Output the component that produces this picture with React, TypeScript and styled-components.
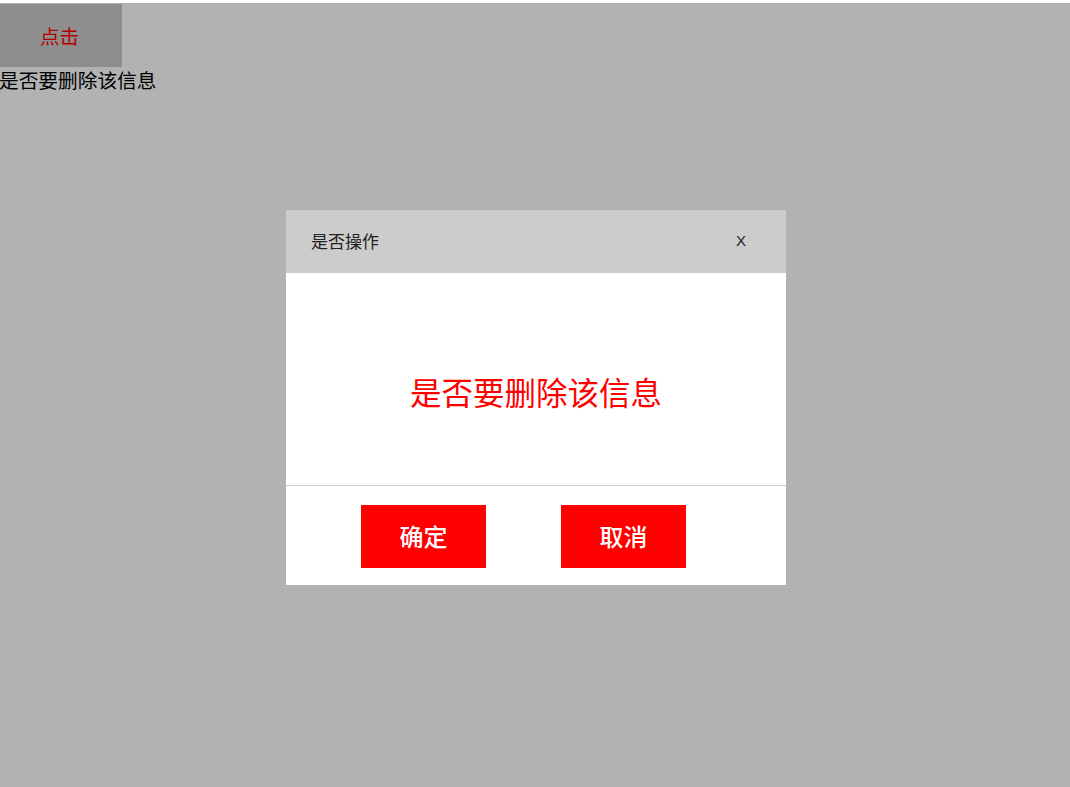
import React from "react";
import styled, { createGlobalStyle } from "styled-components";

const Global = createGlobalStyle`
  html, body { margin: 0; padding: 0; background: #ffffff; }
  body { font-family: "Microsoft YaHei", "Noto Sans CJK SC", "Noto Sans", sans-serif; }
`;

const Page = styled.div`
  width: 1070px;
  height: 787px;
  padding-top: 4px;
  box-sizing: border-box;
`;

const TriggerButton = styled.button`
  display: block;
  width: 122px;
  height: 63px;
  border: none;
  margin: 0;
  padding: 0 3px 0 0;
  background: #cccccc;
  color: #ff0000;
  font-family: "Noto Sans CJK SC", sans-serif;
  font-size: 19.5px;
`;

const Message = styled.div`
  font-family: "Noto Sans CJK SC", sans-serif;
  font-size: 19.7px;
  line-height: 26px;
  margin-left: -1px;
  color: #000;
`;

const Overlay = styled.div`
  position: fixed;
  left: 0;
  right: 0;
  top: 3px;
  bottom: 0;
  background: rgba(0, 0, 0, 0.3);
  display: flex;
  justify-content: center;
  padding-top: 207px;
  box-sizing: border-box;
  align-items: flex-start;
`;

const Dialog = styled.div`
  width: 500px;
  background: #ffffff;
  margin-left: 2px;
`;

const Header = styled.div`
  height: 63px;
  background: #cccccc;
  display: flex;
  align-items: center;
  justify-content: space-between;
  padding: 0 40px 0 25px;
  box-sizing: border-box;
`;

const Title = styled.span`
  font-family: "Noto Sans CJK SC", sans-serif;
  font-size: 17px;
  line-height: 20px;
  margin-top: -2px;
  color: #222;
`;

const Close = styled.span`
  font-family: "Liberation Sans", Arial, sans-serif;
  font-size: 15px;
  line-height: 18px;
  margin-top: -2px;
  color: #222;
`;

const Body = styled.div`
  height: 213px;
  box-sizing: border-box;
  padding-top: 101px;
  text-align: center;
  font-family: "Noto Sans CJK SC", sans-serif;
  font-size: 31.5px;
  line-height: 34px;
  color: #ff0000;
  border-bottom: 1px solid #cccccc;
`;

const Footer = styled.div`
  height: 99px;
  display: flex;
  align-items: flex-start;
  padding-top: 19px;
  box-sizing: border-box;
`;

const ActionButton = styled.button`
  width: 125px;
  height: 63px;
  margin: 0 0 0 75px;
  padding: 0 0 3px;
  border: none;
  background: #ff0000;
  color: #ffffff;
  font-family: "Noto Sans CJK SC", sans-serif;
  font-size: 24px;
  font-weight: 500;
`;

export default function App() {
  return (
    <>
      <Global />
      <Page>
        <TriggerButton>点击</TriggerButton>
        <Message>是否要删除该信息</Message>
      </Page>
      <Overlay>
        <Dialog>
          <Header>
            <Title>是否操作</Title>
            <Close>X</Close>
          </Header>
          <Body>是否要删除该信息</Body>
          <Footer>
            <ActionButton>确定</ActionButton>
            <ActionButton>取消</ActionButton>
          </Footer>
        </Dialog>
      </Overlay>
    </>
  );
}
